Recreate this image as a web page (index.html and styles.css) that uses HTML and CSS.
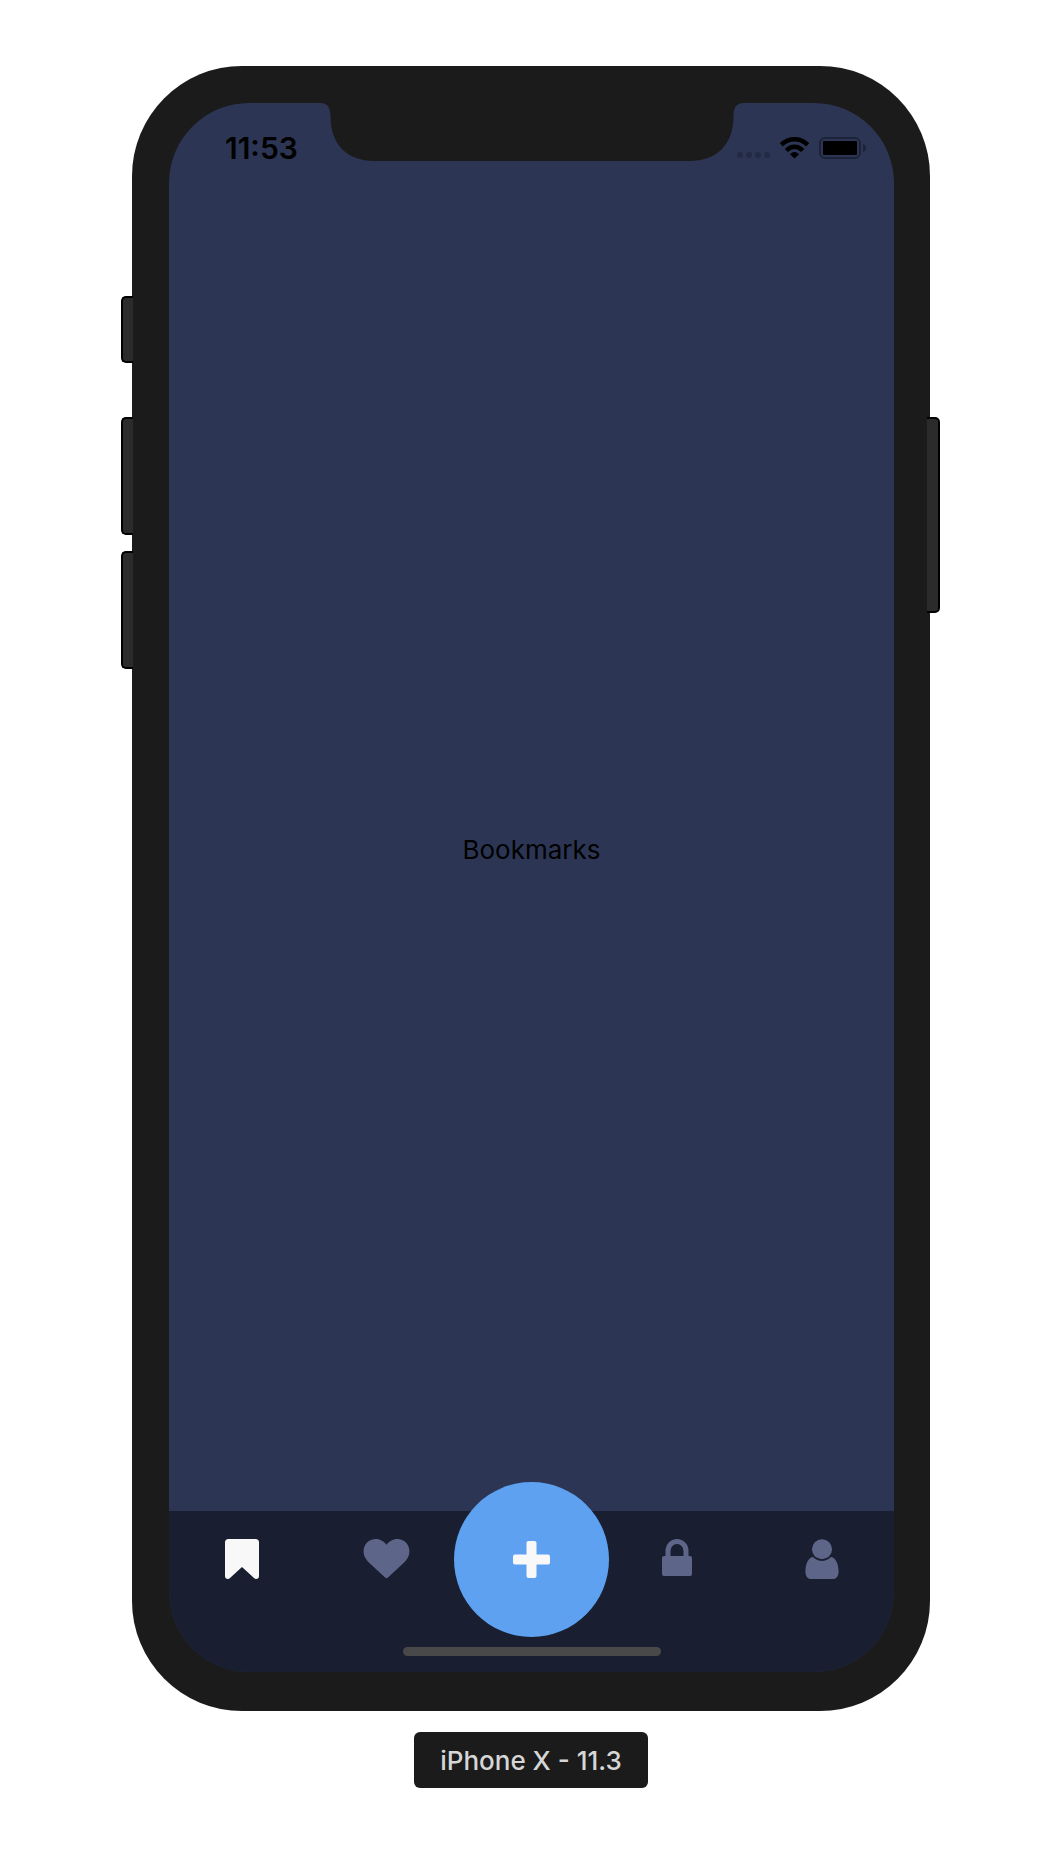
FILE: index.html
```html
<!DOCTYPE html>
<html lang="en">
<head>
<meta charset="utf-8">
<meta name="viewport" content="width=device-width, initial-scale=1">
<title>Bookmarks</title>
<link rel="stylesheet" href="styles.css">
</head>
<body class="stage">
<div class="phone">
  <span class="key key-mute"></span>
  <span class="key key-up"></span>
  <span class="key key-down"></span>
  <span class="key key-power"></span>
  <div class="screen">
    <svg class="notch" width="423" height="58" viewBox="0 0 423 58" aria-hidden="true">
      <path fill="#1b1b1b" d="M0 0H423C416 0 413 5 413 13C413 42 396 58 369 58H54C27 58 10 42 10 13C10 5 7 0 0 0Z"/>
    </svg>
    <header class="status">
      <time class="clock">11:53</time>
      <div class="indicators">
        <svg class="signal" width="33" height="22" viewBox="0 0 33 22" aria-hidden="true">
          <g fill="#232b44"><circle cx="3" cy="18" r="3"/><circle cx="12" cy="18" r="3"/><circle cx="21" cy="18" r="3"/><circle cx="30" cy="18" r="3"/></g>
        </svg>
        <svg class="wifi" width="29" height="22" viewBox="0 0 29 22" aria-hidden="true">
          <path fill="none" stroke="#000" stroke-width="4.500" d="M1.400 7.800Q7 2.200 14.500 2.200T27.600 7.800M6.300 13.500Q10 9.700 14.500 9.700T22.700 13.500"/>
          <path d="M14.500 21.500L10 17.200Q14.500 13 19 17.200Z"/>
        </svg>
        <svg class="battery" width="47" height="22" viewBox="0 0 47 22" aria-hidden="true">
          <rect x="1" y="1" width="40" height="20" rx="5" fill="none" stroke="#1d2439" stroke-width="2"/>
          <rect x="3.500" y="3.500" width="35" height="15" rx="2"/>
          <path fill="none" stroke="#2c3654" d="M5 3.500H37Q38.500 3.500 38.500 5V17Q38.500 18.500 37 18.500H5Q3.500 18.500 3.500 17V5Q3.500 3.500 5 3.500Z"/>
          <path fill="#1d2439" d="M44 7Q47 8 47 11T44 15Z"/>
        </svg>
      </div>
    </header>
    <main class="content"><h1 class="title">Bookmarks</h1></main>
    <nav class="tabs" aria-label="Main">
      <div class="tab-row">
        <a class="tab tab-active" href="#bookmarks" aria-label="Bookmarks" aria-current="page">
          <svg width="34" height="40" viewBox="0 0 34 40"><path d="M3.500 0H30.500Q34 0 34 3.500V37Q34 40 31 40Q30 40 29 39L17 28L5 39Q4 40 3 40Q0 40 0 37V3.500Q0 0 3.500 0Z"/></svg>
        </a>
        <a class="tab" href="#favorites" aria-label="Favorites">
          <svg width="47" height="40" viewBox="0 0 47 41"><path d="M23.500 6C26 2.500 30 0 34.500 0C41.500 0 47 5.500 47 12.500C47 17.500 44.500 21 41 24.500L25 39.500Q23.500 41 22 39.500L6 24.500C2.500 21 0 17.500 0 12.500C0 5.500 5.500 0 12.500 0C17 0 21 2.500 23.500 6Z"/></svg>
        </a>
        <button class="add" type="button" aria-label="Add">
          <svg width="37" height="37" viewBox="0 0 37 37"><rect x="13.500" width="10" height="37" rx="2"/><rect y="13.500" width="37" height="10" rx="2"/></svg>
        </button>
        <a class="tab" href="#private" aria-label="Private">
          <svg width="30" height="40" viewBox="0 0 30 40"><path fill="none" stroke="currentColor" stroke-width="5" d="M6 18V12A9 9.500 0 0 1 24 12V18"/><rect y="17" width="30" height="20" rx="2"/></svg>
        </a>
        <a class="tab" href="#profile" aria-label="Profile">
          <svg width="34" height="40" viewBox="0 0 34 41"><circle cx="17" cy="10.500" r="10.300"/><path d="M7.500 18.500C10 20 12 22.500 17 22.500S24 20 26.500 18.500C31 19 34 26 34 33C34 38 32 41 28 41H6C2 41 0 38 0 33C0 26 3 19 7.500 18.500Z"/></svg>
        </a>
      </div>
      <span class="home-bar"></span>
    </nav>
  </div>
</div>
<p class="device">iPhone X - 11.3</p>
</body>
</html>
```
FILE: styles.css
```css
* {
  box-sizing: border-box;
}

.stage {
  margin: 0;
  min-height: 100vh;
  padding: 66px 132px 84px;
  display: flex;
  flex-direction: column;
  align-items: center;
  gap: 21px;
  background: #fff;
  font-family: Inter, "Liberation Sans", sans-serif;
}

.phone {
  position: relative;
  flex: 1;
  align-self: stretch;
  display: flex;
  padding: 37px 36px 39px 37px;
  border-radius: 110px;
  background: #1b1b1b;
}

.key {
  position: absolute;
  left: -11px;
  width: 12px;
  border: 2px solid #000;
  border-right: 0;
  border-radius: 5px 0 0 5px;
  background: #2b2b2b;
}

.key-mute {
  top: 230px;
  height: 67px;
}

.key-up {
  top: 351px;
  height: 118px;
}

.key-down {
  top: 485px;
  height: 118px;
}

.key-power {
  top: 351px;
  left: auto;
  right: -10px;
  width: 13px;
  height: 196px;
  border: 2px solid #000;
  border-left: 0;
  border-radius: 0 5px 5px 0;
}

.screen {
  position: relative;
  flex: 1;
  display: flex;
  flex-direction: column;
  border-radius: 80px;
  overflow: hidden;
  background: #2c3654;
}

.notch {
  position: absolute;
  top: 0;
  left: 50%;
  transform: translateX(-50%);
}

.status {
  display: flex;
  align-items: center;
  justify-content: space-between;
  height: 88px;
  padding: 2px 28px 0 56px;
}

.clock {
  font-size: 30px;
  font-weight: 600;
  line-height: 32px;
}

.indicators {
  display: flex;
  align-items: center;
  gap: 10px;
}

.content {
  flex: 1;
  display: flex;
  align-items: center;
  justify-content: center;
  padding-bottom: 2px;
}

.title {
  margin: 0;
  font-size: 26px;
  font-weight: 400;
  line-height: 32px;
}

.tabs {
  display: flex;
  flex-direction: column;
  align-items: center;
  gap: 40px;
  padding-bottom: 16px;
  background: #191f30;
}

.tab-row {
  align-self: stretch;
  display: grid;
  grid-template-columns: repeat(5, 1fr);
  align-items: center;
  justify-items: center;
  height: 96px;
}

.tab {
  display: flex;
  color: #5d6688;
}

.tab svg,
.add svg {
  fill: currentColor;
}

.tab-active {
  color: #f8f8f8;
}

.add {
  display: flex;
  align-items: center;
  justify-content: center;
  width: 155px;
  height: 155px;
  margin: -30px;
  padding: 0;
  border: 0;
  border-radius: 50%;
  background: #5ea1f1;
  color: #f8f8f8;
}

.home-bar {
  width: 258px;
  height: 9px;
  border-radius: 5px;
  background: #494949;
}

.device {
  margin: 0;
  padding: 13px 26px 11px;
  border-radius: 6px;
  background: #1b1b1b;
  color: #d6d6d6;
  font-size: 26px;
  font-weight: 500;
  line-height: 32px;
}
```
